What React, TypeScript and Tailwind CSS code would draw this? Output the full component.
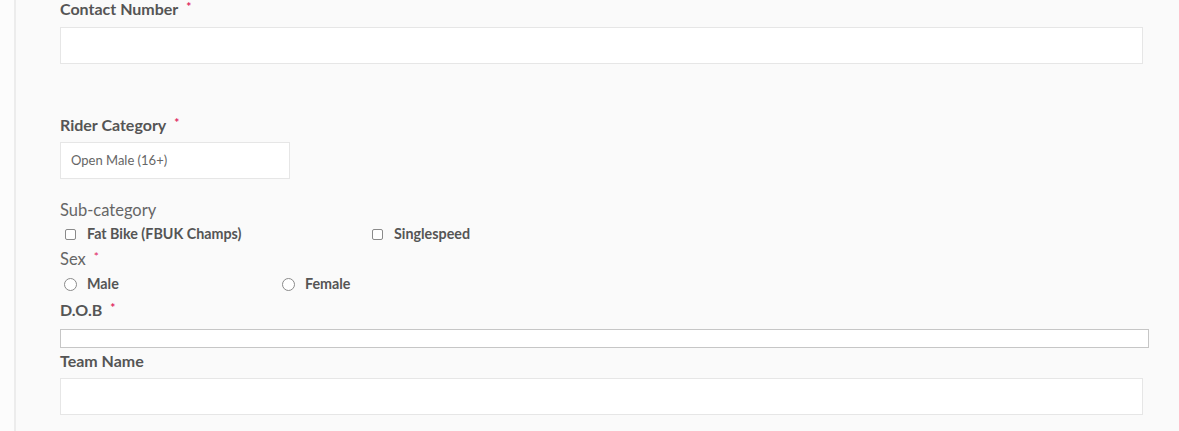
import React from "react";

const font = { fontFamily: "Lato, 'Open Sans', Arial, sans-serif" };

function Req() {
  return <span className="ml-[8px] text-[12px] leading-none text-[#e0245e] relative -top-[2px]">*</span>;
}

function Label({ text, required = false, bold = true }: { text: string; required?: boolean; bold?: boolean }) {
  return (
    <div
      className={`h-[18px] flex items-center leading-none ${
        bold ? "text-[16px] font-bold text-[#555]" : "text-[16.5px] text-[#666]"
      }`}
    >
      {text}
      {required && <Req />}
    </div>
  );
}

function Check({ label, className = "" }: { label: string; className?: string }) {
  return (
    <label className={`flex items-center h-[16px] ${className}`}>
      <span className="ml-[5px] w-[11px] h-[11px] rounded-[2px] border border-[#8a8a8a] bg-white" />
      <span className="ml-[11px] text-[14.3px] font-bold text-[#555]">{label}</span>
    </label>
  );
}

function Radio({ label, className = "" }: { label: string; className?: string }) {
  return (
    <label className={`flex items-center h-[16px] ${className}`}>
      <span className="ml-[4px] w-[13px] h-[13px] rounded-full border border-[#8a8a8a] bg-white" />
      <span className="ml-[10px] text-[14.3px] font-bold text-[#555]">{label}</span>
    </label>
  );
}

export default function App() {
  return (
    <div className="w-[1179px] h-[431px] bg-[#fafafa] flex overflow-hidden" style={font}>
      <div className="w-[14px] bg-[#fcfcfc]" />
      <div className="w-[2px] bg-[#ececec]" />
      <div className="flex-1 pl-[44px]">
        <Label text="Contact Number" required />
        <div className="mt-[9px] w-[1083px] h-[37px] bg-white border border-[#e6e6e6]" />

        <div className="mt-[52px]">
          <Label text="Rider Category" required />
        </div>
        <div className="mt-[8px] w-[230px] h-[37px] bg-white border border-[#e6e6e6] flex items-center pl-[10px] text-[13px] text-[#666]">
          Open Male (16+)
        </div>

        <div className="mt-[22px]">
          <Label text="Sub-category" bold={false} />
        </div>
        <div className="flex mt-[7px]">
          <Check label="Fat Bike (FBUK Champs)" className="w-[307px]" />
          <Check label="Singlespeed" />
        </div>

        <div className="mt-[8px]">
          <Label text="Sex" required bold={false} />
        </div>
        <div className="flex mt-[8px]">
          <Radio label="Male" className="w-[218px]" />
          <Radio label="Female" />
        </div>

        <div className="mt-[9px]">
          <Label text="D.O.B" required />
        </div>
        <div className="mt-[10px] w-[1089px] h-[19px] bg-white border border-[#c6c6c6]" />

        <div className="mt-[4px]">
          <Label text="Team Name" />
        </div>
        <div className="mt-[8px] w-[1083px] h-[37px] bg-white border border-[#e6e6e6]" />
      </div>
    </div>
  );
}
